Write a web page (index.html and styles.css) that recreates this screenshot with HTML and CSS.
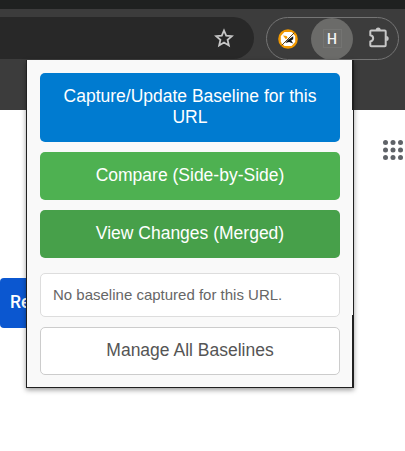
FILE: index.html
```html
<!DOCTYPE html>
<html lang="en">
<head>
<meta charset="utf-8">
<title>Baselines</title>
<link rel="stylesheet" href="styles.css">
</head>
<body>
<header class="browser">
  <div class="toolbar">
    <div class="omnibox">
      <svg class="star" width="20" height="20" viewBox="0 0 20 20"><path d="M10 2.500l2.200 5.200 5.600.500-4.200 3.700 1.250 5.500-4.850-2.900-4.850 2.900 1.250-5.500-4.200-3.700 5.600-.500z"/></svg>
    </div>
    <div class="extensions">
      <svg class="badge-icon" width="20" height="20" viewBox="0 0 20 20"><circle cx="10" cy="10" r="9.800" fill="#f29900"/><path d="M6.500 3h7l3.700 4v6l-3.700 4h-7l-3.700-4V7z" fill="#fff"/><path d="M5 6.500l3.500.500 1.500 2-2 1.500z" fill="#f29900"/><path d="M10 10.800l5.200-3.500v3l-2 1.200 2 3-4-1.500-4 1z" fill="#171717"/><path d="M4 15.200l11.200-11.200" stroke="#fff" stroke-width="1.500"/><path d="M3.500 16.500l13-13" stroke="#5b4218" stroke-width="1"/></svg>
      <div class="active"><span>H</span></div>
      <svg class="puzzle" width="24" height="24" viewBox="0 0 24 24"><path d="M5.300 4.500h13.400q1 0 1 1v13.700q0 1-1 1H5.300q-1 0-1-1v-3.700c3.800-.600 3.800-5.800 0-6.300V5.500q0-1 1-1z"/><path class="knob" d="M9.700 4a2.500 2.500 0 0 1 5 0zM20.200 10a2.500 2.500 0 0 1 0 5z"/></svg>
    </div>
  </div>
</header>
<main class="page">
  <svg class="apps" width="20" height="20" viewBox="0 0 20 20"><circle cx="2.500" cy="2.500" r="2.500"/><circle cx="10" cy="2.500" r="2.500"/><circle cx="17.500" cy="2.500" r="2.500"/><circle cx="2.500" cy="10" r="2.500"/><circle cx="10" cy="10" r="2.500"/><circle cx="17.500" cy="10" r="2.500"/><circle cx="2.500" cy="17.500" r="2.500"/><circle cx="10" cy="17.500" r="2.500"/><circle cx="17.500" cy="17.500" r="2.500"/></svg>
  <div class="page-button">Re</div>
</main>
<section class="popup">
  <button class="btn capture">Capture/Update Baseline for this URL</button>
  <button class="btn compare">Compare (Side-by-Side)</button>
  <button class="btn changes">View Changes (Merged)</button>
  <div class="status">No baseline captured for this URL.</div>
  <button class="btn manage">Manage All Baselines</button>
</section>
</body>
</html>
```
FILE: styles.css
```css
* { box-sizing: border-box; }
body {
  margin: 0;
  height: 451px;
  overflow: hidden;
  position: relative;
  background: #fff;
  font-family: "Liberation Sans", Arial, sans-serif;
}
.browser {
  height: 110px;
  background: #3c3c3c;
  border-top: 9px solid #1f2120;
}
.toolbar {
  display: flex;
  padding: 8px 6px 0 0;
  gap: 12px;
}
.omnibox {
  width: 254px;
  height: 42px;
  display: flex;
  align-items: center;
  justify-content: flex-end;
  padding-right: 20px;
  background: #282828;
  border-radius: 0 21px 21px 0;
}
.star { fill: none; stroke: #c7c7c7; stroke-width: 1.800; }
.extensions {
  width: 133px;
  height: 43px;
  display: flex;
  align-items: center;
  border: 1px solid #757575;
  border-radius: 22px;
  padding-left: 10.500px;
}
.active {
  width: 42px;
  height: 42px;
  margin-left: 13.500px;
  border-radius: 50%;
  background: #6b6b69;
  display: flex;
  align-items: center;
  justify-content: center;
}
.active span {
  width: 19px;
  height: 19px;
  border: 1px solid #747472;
  color: #f4f4f4;
  font: 500 14px/18px Roboto, sans-serif;
  text-align: center;
}
.puzzle { margin: 0 0 2px 13px; fill: none; stroke: #c7c7c7; stroke-width: 2; stroke-linejoin: round; }
.puzzle .knob { fill: #c7c7c7; stroke: none; }
.page {
  display: flex;
  flex-direction: column;
  padding-top: 30px;
}
.apps { align-self: flex-end; margin-right: 2px; fill: #5f6368; }
.page-button {
  width: 60px;
  height: 50px;
  margin-top: 118px;
  padding-left: 10px;
  border-radius: 4px;
  background: #0b57d0;
  color: #fff;
  font: 500 17.500px/49px Roboto, sans-serif;
}
.popup {
  position: absolute;
  left: 26px;
  top: 60px;
  width: 328px;
  height: 328px;
  padding: 13px 13px 0;
  display: flex;
  flex-direction: column;
  gap: 10px;
  background: #f9f9f9;
  border: solid #202020;
  border-width: 0 1px 1px;
  box-shadow: 0 2px 5px rgba(0, 0, 0, .4);
}
.popup::before,
.popup::after {
  content: "";
  position: absolute;
  right: 0;
  width: 1px;
  background: #202020;
}
.popup::before { top: 0; height: 50px; }
.popup::after { bottom: 0; height: 72px; }
.btn {
  width: 300px;
  height: 48px;
  flex: none;
  border: 0;
  border-radius: 5px;
  padding: 0 15px 2px;
  color: #fff;
  font: 17.500px/21px "Liberation Sans", Arial, sans-serif;
}
.capture { height: 69px; background: #007bd0; }
.compare { background: #4eb151; }
.changes { background: #47a04a; }
.status {
  width: 300px;
  height: 44px;
  flex: none;
  margin-top: 5px;
  padding-left: 12px;
  border: 1px solid #ddd;
  border-radius: 5px;
  background: #fff;
  color: #666;
  font-size: 15px;
  line-height: 42px;
}
.manage { background: #fff; border: 1px solid #ccc; color: #555; }
```
